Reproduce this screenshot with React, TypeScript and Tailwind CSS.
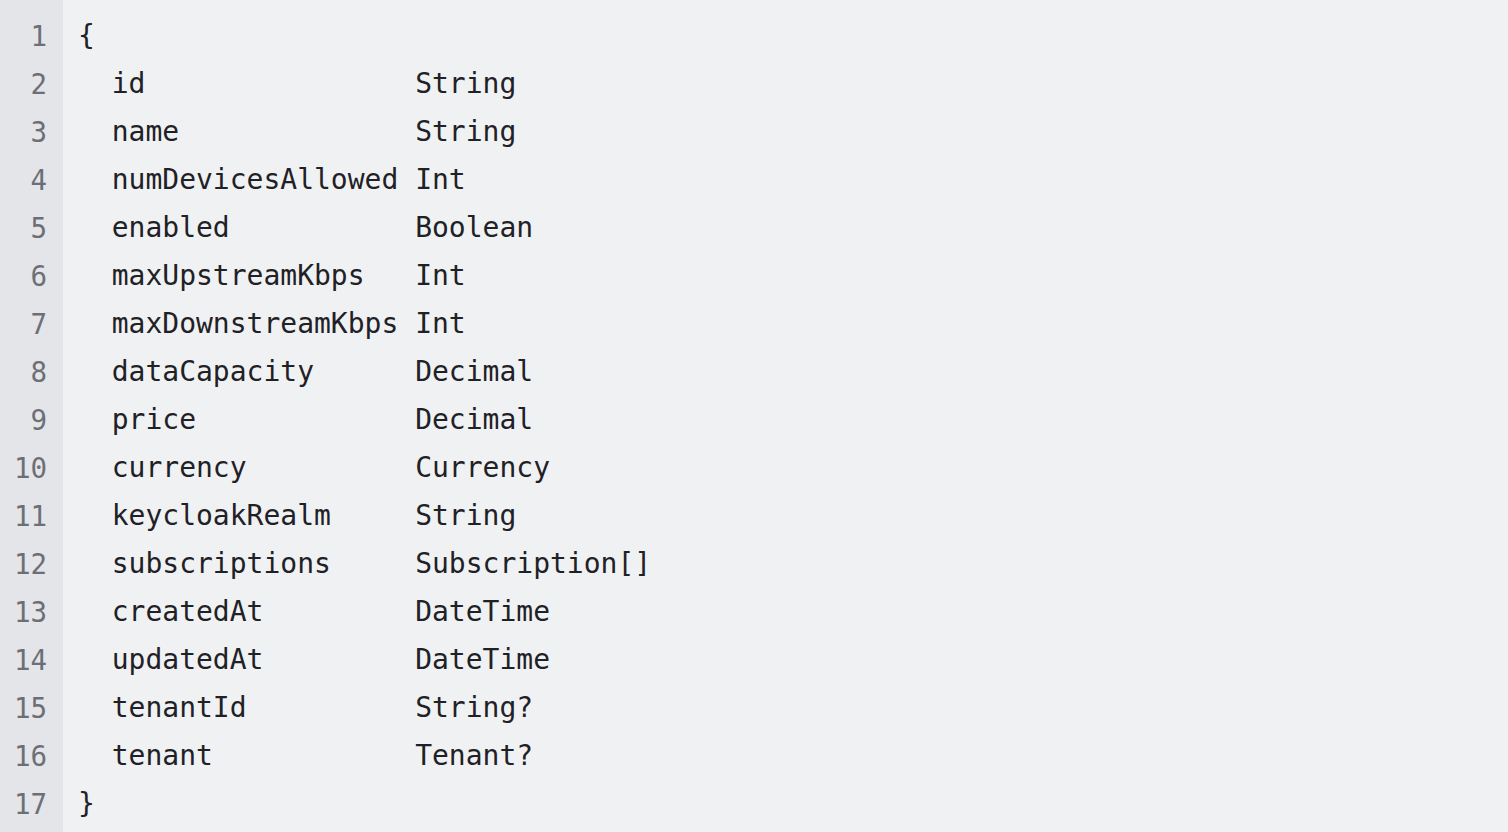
const rows: [string, string][] = [
  ["id", "String"],
  ["name", "String"],
  ["numDevicesAllowed", "Int"],
  ["enabled", "Boolean"],
  ["maxUpstreamKbps", "Int"],
  ["maxDownstreamKbps", "Int"],
  ["dataCapacity", "Decimal"],
  ["price", "Decimal"],
  ["currency", "Currency"],
  ["keycloakRealm", "String"],
  ["subscriptions", "Subscription[]"],
  ["createdAt", "DateTime"],
  ["updatedAt", "DateTime"],
  ["tenantId", "String?"],
  ["tenant", "Tenant?"],
];

const lines: string[] = [
  "{",
  ...rows.map(([name, type]) => "  " + name.padEnd(18, " ") + type),
  "}",
];

export default function App() {
  return (
    <div className="flex min-h-screen w-full bg-[#f0f1f3]">
      {/* gutter */}
      <div className="w-[63px] shrink-0 bg-[#e4e5e8] pt-[12px] pr-[16px] text-right font-['DejaVu_Sans_Mono',monospace] text-[27.5px] leading-[48px] text-[#6c6f77]">
        {lines.map((_, i) => (
          <div key={i}>{i + 1}</div>
        ))}
      </div>
      {/* code */}
      <div className="pt-[12px] pl-[15px] font-['DejaVu_Sans_Mono',monospace] text-[28px] leading-[48px] text-[#1f2126] whitespace-pre">
        {lines.map((l, i) => (
          <div key={i}>{l}</div>
        ))}
      </div>
    </div>
  );
}
